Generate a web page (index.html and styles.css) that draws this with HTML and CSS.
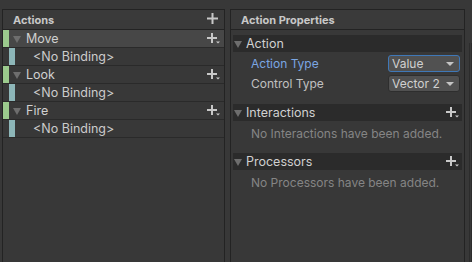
FILE: index.html
```html
<!DOCTYPE html>
<html>
<head>
<meta charset="utf-8">
<link rel="stylesheet" href="styles.css">
</head>
<body>
<div class="app">
  <div class="panel left">
    <div class="phead">
      <span class="ptitle">Actions</span>
      <svg class="plus" width="11" height="11" viewBox="0 0 11 11"><path d="M4.5 0h2v4.5H11v2H6.5V11h-2V6.5H0v-2h4.5z" fill="#c8c8c8"/></svg>
    </div>
    <div class="row action sel">
      <span class="bar green"></span>
      <span class="tri"></span>
      <span class="rtext">Move</span>
      <svg class="plusdd" width="13" height="11" viewBox="0 0 13 11"><path d="M4 0h2v4h4v2H6v4H4V6H0V4h4z" fill="#c8c8c8"/><path d="M9 8.5h4l-2 2z" fill="#c8c8c8"/></svg>
    </div>
    <div class="row binding">
      <span class="bar blue"></span>
      <span class="rtext">&lt;No Binding&gt;</span>
    </div>
    <div class="row action">
      <span class="bar green"></span>
      <span class="tri"></span>
      <span class="rtext">Look</span>
      <svg class="plusdd" width="13" height="11" viewBox="0 0 13 11"><path d="M4 0h2v4h4v2H6v4H4V6H0V4h4z" fill="#c8c8c8"/><path d="M9 8.5h4l-2 2z" fill="#c8c8c8"/></svg>
    </div>
    <div class="row binding">
      <span class="bar blue"></span>
      <span class="rtext">&lt;No Binding&gt;</span>
    </div>
    <div class="row action">
      <span class="bar green"></span>
      <span class="tri"></span>
      <span class="rtext">Fire</span>
      <svg class="plusdd" width="13" height="11" viewBox="0 0 13 11"><path d="M4 0h2v4h4v2H6v4H4V6H0V4h4z" fill="#c8c8c8"/><path d="M9 8.5h4l-2 2z" fill="#c8c8c8"/></svg>
    </div>
    <div class="row binding">
      <span class="bar blue"></span>
      <span class="rtext">&lt;No Binding&gt;</span>
    </div>
  </div>
  <div class="panel right">
    <div class="phead">
      <span class="ptitle">Action Properties</span>
    </div>
    <div class="pbody">
      <div class="fold">
        <span class="tri"></span>
        <span class="ftext">Action</span>
      </div>
      <div class="field">
        <span class="flabel focus">Action Type</span>
        <div class="dd focused"><span>Value</span><span class="ddarrow"></span></div>
      </div>
      <div class="field">
        <span class="flabel">Control Type</span>
        <div class="dd"><span>Vector 2</span><span class="ddarrow"></span></div>
      </div>
      <div class="fold gap">
        <span class="tri"></span>
        <span class="ftext">Interactions</span>
        <svg class="plusdd" width="13" height="11" viewBox="0 0 13 11"><path d="M4 0h2v4h4v2H6v4H4V6H0V4h4z" fill="#c8c8c8"/><path d="M9 8.5h4l-2 2z" fill="#c8c8c8"/></svg>
      </div>
      <div class="empty">No Interactions have been added.</div>
      <div class="fold gap2">
        <span class="tri"></span>
        <span class="ftext">Processors</span>
        <svg class="plusdd" width="13" height="11" viewBox="0 0 13 11"><path d="M4 0h2v4h4v2H6v4H4V6H0V4h4z" fill="#c8c8c8"/><path d="M9 8.5h4l-2 2z" fill="#c8c8c8"/></svg>
      </div>
      <div class="empty">No Processors have been added.</div>
    </div>
  </div>
  <div class="edge"></div>
</div>
</body>
</html>
```

FILE: styles.css
```css
html, body {
  margin: 0;
  padding: 0;
}
body {
  width: 472px;
  height: 262px;
  overflow: hidden;
  background: #383838;
  font-family: Inter, "Noto Sans", sans-serif;
  font-size: 12px;
  color: #c4c4c4;
}
.app {
  display: flex;
  height: 262px;
  box-sizing: border-box;
  padding: 9px 0 0 2px;
}
.panel {
  box-sizing: border-box;
  border: 1px solid #232323;
  border-bottom: none;
  background: #383838;
  display: flex;
  flex-direction: column;
}
.left {
  width: 223px;
}
.right {
  width: 235px;
  margin-left: 5px;
}
.edge {
  flex: 1;
  margin-top: 34px;
  margin-left: 4px;
  border-left: 1px solid #2c2c2c;
  border-right: 1px solid #2c2c2c;
  width: 0;
  max-width: 2px;
}
.phead {
  height: 19px;
  border-bottom: 1px solid #232323;
  background: #3a3a3a;
  display: flex;
  align-items: center;
  padding: 0 6px 0 10px;
  flex-shrink: 0;
}
.ptitle {
  font-weight: 700;
  font-size: 11px;
  color: #c8c8c8;
  flex: 1;
}
.plus {
  display: block;
  margin-top: -2px;
}
.row {
  height: 17px;
  border-bottom: 1px solid #2a2a2a;
  display: flex;
  align-items: center;
  flex-shrink: 0;
}
.row.sel {
  background: #474747;
}
.bar {
  align-self: stretch;
  width: 6px;
}
.bar.green {
  background: #9bca8d;
}
.bar.blue {
  background: #8db6b8;
  margin-left: 6px;
}
.tri {
  width: 0;
  height: 0;
  border-left: 4px solid transparent;
  border-right: 4px solid transparent;
  border-top: 7px solid #6e6e6e;
  margin: 1px 0 0 4px;
}
.rtext {
  flex: 1;
  color: #d0d0d0;
  font-size: 12.5px;
}
.action .rtext {
  margin-left: 5px;
}
.binding .rtext {
  margin-left: 18px;
  color: #cccccc;
}
.plusdd {
  display: block;
  margin-right: 4px;
}
.pbody {
  padding: 5px 2px 0 2px;
  display: flex;
  flex-direction: column;
}
.fold {
  height: 17px;
  background: #2b2b2b;
  display: flex;
  align-items: center;
}
.fold .tri {
  margin-left: 1px;
}
.ftext {
  flex: 1;
  margin-left: 4px;
  color: #d0d0d0;
  font-size: 12.5px;
}
.fold .plusdd {
  margin-right: 3px;
}
.field {
  display: flex;
  align-items: center;
  justify-content: space-between;
  height: 17px;
  margin-top: 3px;
  padding: 0 2px 0 18px;
}
.field + .field {
  margin-top: 3px;
}
.flabel {
  color: #c0c0c0;
}
.flabel.focus {
  color: #7ba6e2;
}
.dd {
  box-sizing: border-box;
  width: 72px;
  height: 17px;
  border: 1px solid #2e2e2e;
  border-radius: 3px;
  background: #515151;
  display: flex;
  align-items: center;
  justify-content: space-between;
  padding: 0 5px 0 3px;
  color: #d0d0d0;
}
.dd.focused {
  border-color: #3f78b8;
}
.ddarrow {
  width: 0;
  height: 0;
  border-left: 4px solid transparent;
  border-right: 4px solid transparent;
  border-top: 4px solid #c4c4c4;
}
.gap {
  margin-top: 12px;
}
.gap2 {
  margin-top: 11px;
}
.empty {
  color: #858585;
  padding-left: 18px;
  height: 17px;
  line-height: 17px;
  margin-top: 4px;
}
```
